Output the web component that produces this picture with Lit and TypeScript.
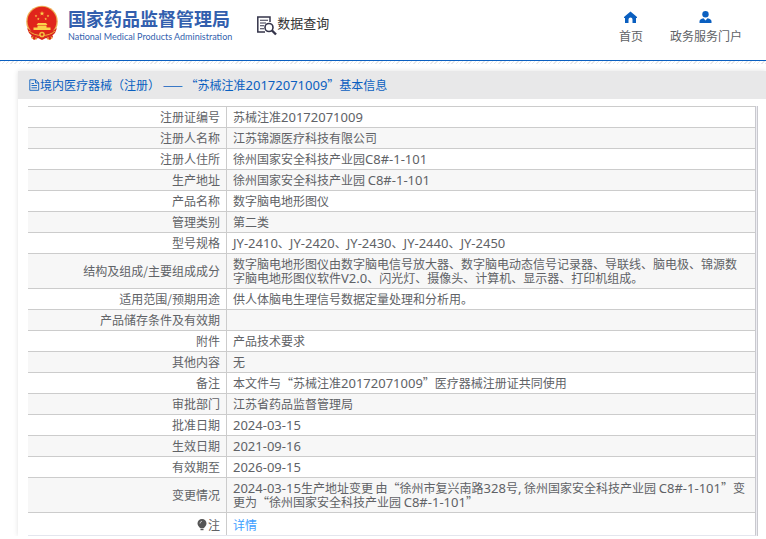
import { LitElement, html, css, svg, TemplateResult } from "lit";
import { customElement } from "lit/decorators.js";

type Row = { label: string; value: string; link?: boolean; bulb?: boolean };

const ROWS: Row[] = [
  { label: "注册证编号", value: "苏械注准20172071009" },
  { label: "注册人名称", value: "江苏锦源医疗科技有限公司" },
  { label: "注册人住所", value: "徐州国家安全科技产业园C8#-1-101" },
  { label: "生产地址", value: "徐州国家安全科技产业园 C8#-1-101" },
  { label: "产品名称", value: "数字脑电地形图仪" },
  { label: "管理类别", value: "第二类" },
  { label: "型号规格", value: "JY-2410、JY-2420、JY-2430、JY-2440、JY-2450" },
  {
    label: "结构及组成/主要组成成分",
    value:
      "数字脑电地形图仪由数字脑电信号放大器、数字脑电动态信号记录器、导联线、脑电极、锦源数字脑电地形图仪软件V2.0、闪光灯、摄像头、计算机、显示器、打印机组成。",
  },
  { label: "适用范围/预期用途", value: "供人体脑电生理信号数据定量处理和分析用。" },
  { label: "产品储存条件及有效期", value: "" },
  { label: "附件", value: "产品技术要求" },
  { label: "其他内容", value: "无" },
  { label: "备注", value: "本文件与“苏械注准20172071009”医疗器械注册证共同使用" },
  { label: "审批部门", value: "江苏省药品监督管理局" },
  { label: "批准日期", value: "2024-03-15" },
  { label: "生效日期", value: "2021-09-16" },
  { label: "有效期至", value: "2026-09-15" },
  {
    label: "变更情况",
    value:
      "2024-03-15生产地址变更 由“徐州市复兴南路328号, 徐州国家安全科技产业园 C8#-1-101”变更为“徐州国家安全科技产业园 C8#-1-101”",
  },
  { label: "注", value: "详情", link: true, bulb: true },
];

/* Latin runs get their own face; Chinese text and its quotes keep the CJK one. */
const mixed = (text: string): (string | TemplateResult)[] =>
  text
    .split(/([A-Za-z0-9#.,-]+)/)
    .map((part, i) => (i % 2 ? html`<span class="latin">${part}</span>` : part));

const star = (cx: number, cy: number, r: number) => {
  const pts = Array.from({ length: 10 }, (_, i) => {
    const a = (Math.PI / 5) * i - Math.PI / 2;
    const d = i % 2 ? r * 0.4 : r;
    return `${(cx + d * Math.cos(a)).toFixed(2)},${(cy + d * Math.sin(a)).toFixed(2)}`;
  }).join(" ");
  return svg`<polygon points=${pts} fill="#fbd04a"></polygon>`;
};

@customElement("app-root")
export class AppRoot extends LitElement {
  static styles = css`
    :host {
      display: block;
      background: #fff;
      color: #606266;
      font: 12px/14px "Noto Sans CJK SC", sans-serif;
    }
    a {
      color: inherit;
      text-decoration: none;
    }
    svg {
      display: block;
      flex: none;
    }
    .latin {
      font-family: "Noto Sans", sans-serif;
      font-size: 13px;
      line-height: 0;
      white-space: nowrap;
    }
    .top {
      display: flex;
      align-items: flex-start;
      height: 60px;
      border-bottom: 1px solid #0a5fc0;
    }
    .brand {
      display: flex;
      gap: 9px;
      padding: 5px 0 0 25px;
      color: #335fae;
    }
    .names {
      display: flex;
      flex-direction: column;
      gap: 2px;
      padding-top: 3px;
    }
    .zh {
      font-size: 18px;
      line-height: 20px;
      font-weight: 700;
      white-space: nowrap;
    }
    .en {
      font: 400 9px/14px Lato, sans-serif;
      white-space: nowrap;
    }
    .query {
      display: flex;
      margin: 13px 0 0 24px;
      font-size: 13px;
      line-height: 20px;
      color: #333;
      white-space: nowrap;
    }
    .nav {
      display: flex;
      gap: 27px;
      margin-left: auto;
      padding: 11px 24px 0 0;
    }
    .item {
      display: flex;
      flex-direction: column;
      align-items: center;
      gap: 5px;
      line-height: 16px;
      white-space: nowrap;
    }
    .hatch {
      height: 3px;
      background: repeating-linear-gradient(135deg, #e8e8ea 0 1px, #fff 1px 3px);
    }
    .card {
      margin: 7px 0 0 18px;
      box-shadow: 0 0 5px rgba(0, 0, 0, 0.12);
    }
    .title {
      display: flex;
      align-items: center;
      height: 28px;
      margin: 0;
      padding-left: 11px;
      background: #e8e8e9;
      font-size: 12px;
      font-weight: 400;
      color: #0a5fc0;
      white-space: pre;
    }
    .body {
      padding: 7px 8px 0 10px;
    }
    .frame {
      border-right: 1px solid #c9c9cf;
      padding-right: 1px;
      background: #ededf2;
    }
    table {
      width: 100%;
      table-layout: fixed;
      border-collapse: separate;
      border-spacing: 0;
      border-right: 1px solid #c9c9cf;
      border-bottom: 1px solid #e4e6ee;
      background: #fff;
    }
    .key {
      width: 199px;
    }
    th,
    td {
      padding: 3px 6px;
      height: 14px;
      border-top: 1px solid #ccc;
      font-weight: 400;
      vertical-align: middle;
    }
    th {
      text-align: right;
      padding-left: 0;
      border-right: 1px solid #ccc;
    }
    td {
      text-align: left;
      padding-right: 8px;
    }
    tr:nth-child(even) {
      background: #f7f7f7;
    }
    .last th,
    .last td {
      padding-top: 5px;
    }
    .note {
      display: flex;
      justify-content: flex-end;
      align-items: center;
      gap: 1px;
    }
    .link {
      color: #409eff;
    }
  `;

  private emblem() {
    return svg`<svg width="34" height="37" viewBox="0 0 34 37" aria-hidden="true">
      <path d="M8 26 L26 26 L28 32 L25 35 L21 33 L17 35 L13 33 L9 35 L6 32Z" fill="#d8261c"></path>
      <circle cx="17" cy="16.5" r="15.8" fill="#eeb055"></circle>
      <circle cx="17" cy="16.2" r="14.5" fill="#e0241b"></circle>
      ${star(17, 8.5, 2.6)}${star(11, 11, 1.4)}${star(13.3, 14, 1.4)}${star(20.7, 14, 1.4)}${star(23, 11, 1.4)}
      <path d="M13 18 L21 18 L22.500 20 L11.500 20Z M12.500 20.600 H21.500 V22.500 H25.500 V25 H8.500 V22.500 H12.500Z" fill="#fbd04a"></path>
      <path d="M2 23 Q8 28 15 27.500 L15 32 Q7 32 4 28Z M32 23 Q26 28 19 27.500 L19 32 Q27 32 30 28Z" fill="#d8261c"></path>
      <path d="M4 26 Q9 30.500 17 30.500 Q25 30.500 30 26" fill="none" stroke="#f3bd3f" stroke-width=".9"></path>
      <circle cx="17" cy="29.500" r="2.800" fill="#f3bd3f"></circle>
      <circle cx="17" cy="29.500" r="1.200" fill="#d8261c"></circle>
      <path d="M11 32 V35 M23 32 V35 M8 31.500 L7 34 M26 31.500 L27 34" stroke="#f3bd3f" stroke-width="1"></path>
    </svg>`;
  }

  private row(r: Row) {
    return html`<tr class=${r.bulb ? "last" : ""}>
      <th scope="row">
        ${r.bulb
          ? html`<span class="note"
              ><svg width="10" height="12" viewBox="0 0 10 12" aria-hidden="true">
                <path d="M5 0a4.500 4.500 0 0 0-4.500 4.500C.5 6.500 2 7.500 3 9h4c1-1.500 2.500-2.500 2.500-4.500A4.500 4.500 0 0 0 5 0z" fill="#555"></path>
                <path d="M3.500 9.600h3v1.600h-3z" fill="#555"></path>
                <path d="M3 4.500Q3 2.500 5 2.200" fill="none" stroke="#ddd" stroke-width=".8"></path></svg
              >${r.label}</span
            >`
          : mixed(r.label)}
      </th>
      <td>${r.link ? html`<a class="link" href="#detail">${r.value}</a>` : mixed(r.value)}</td>
    </tr>`;
  }

  render() {
    return html`
      <header class="top">
        <a class="brand" href="#home">
          ${this.emblem()}
          <span class="names">
            <span class="zh">国家药品监督管理局</span>
            <span class="en">National Medical Products Administration</span>
          </span>
        </a>
        <a class="query" href="#query">
          <svg width="21" height="24" viewBox="0 0 21 24" fill="none" stroke="#34344a" aria-hidden="true">
            <path d="M9 19H1.800V4H14V9" stroke-width="1.500"></path>
            <path d="M4 7.200H12M4 10H10M4 12.800H8M4 15.800H8" stroke-width="1.100"></path>
            <circle cx="13" cy="14.500" r="4" stroke-width="1.600"></circle>
            <path d="M16 17.500L20 21.500" stroke-width="2.400"></path>
          </svg>
          数据查询
        </a>
        <nav class="nav">
          <a class="item" href="#index">
            <svg width="13" height="12" viewBox="0 0 13 12" aria-hidden="true">
              <path d="M6.500 0.500L13 6V7H12V12H8.500V8.500A2 2 0 0 0 4.500 8.500V12H1V7H0V6Z" fill="#0a5fc0"></path>
            </svg>
            首页
          </a>
          <a class="item" href="#portal">
            <svg width="13" height="12" viewBox="0 0 13 12" aria-hidden="true">
              <circle cx="6.500" cy="3.300" r="3.200" fill="#0a5fc0"></circle>
              <path d="M0.500 12V10.500Q0.500 8 4.500 7.300L6.500 9.500L8.500 7.300Q12.500 8 12.500 10.500V12Z" fill="#0a5fc0"></path>
            </svg>
            政务服务门户
          </a>
        </nav>
      </header>
      <div class="hatch"></div>
      <main class="card">
        <h1 class="title"><svg width="11" height="12" viewBox="0 0 11 12" fill="none" stroke="#0a5fc0" aria-hidden="true"><path d="M.8 .8H6.500L9.700 4V11.300H.8ZM6.500 .8V4H9.700" stroke-width=".9"></path><path d="M2.500 4.500H5M2.500 6.500H8M2.500 8.800H8" stroke-width=".9"></path></svg><span>境内医疗器械（注册） —— “${mixed("苏械注准20172071009")}”基本信息</span></h1>
        <div class="body">
          <div class="frame">
            <table>
              <colgroup>
                <col class="key" />
                <col />
              </colgroup>
              <tbody>
                ${ROWS.map((r) => this.row(r))}
              </tbody>
            </table>
          </div>
        </div>
      </main>
    `;
  }
}
